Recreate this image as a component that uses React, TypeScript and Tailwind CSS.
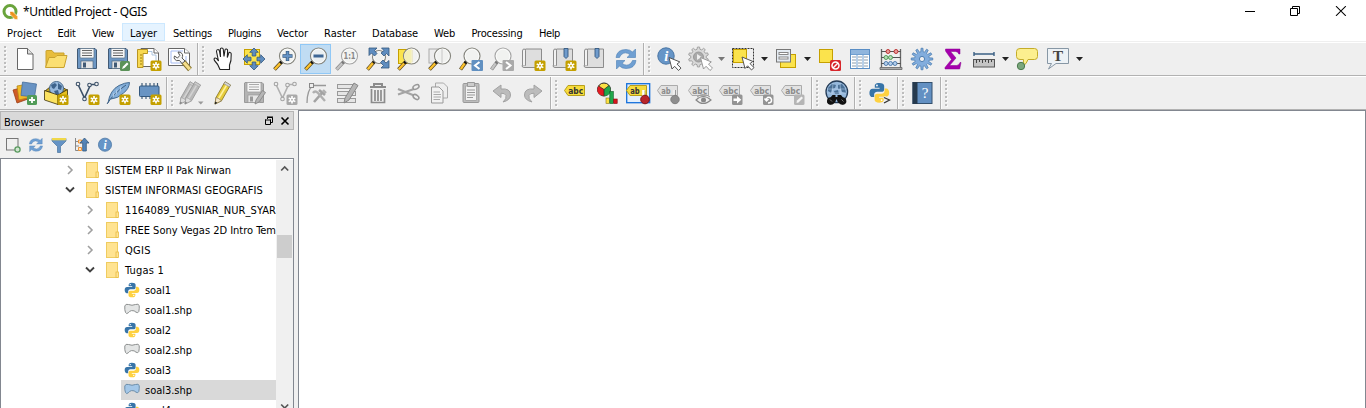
import React from "react";
import type { ReactNode } from "react";

type Kids = { children?: ReactNode };

function Icon({ children }: Kids) {
  return (
    <svg className="block h-6 w-6 overflow-visible" viewBox="0 0 24 24" fill="none">
      {children}
    </svg>
  );
}

function Tool({ children, active }: Kids & { active?: boolean }) {
  return (
    <div
      className={
        active
          ? "flex h-[30px] w-[31px] shrink-0 items-center bg-[#c0dcf3] pl-[3px] border border-[#90c8f6]"
          : "flex h-[30px] w-[31px] shrink-0 items-center pl-1"
      }
    >
      <Icon>{children}</Icon>
    </div>
  );
}

function Drop({ dim }: { dim?: boolean }) {
  return (
    <div className="flex w-3 shrink-0 justify-center">
      <svg className="block h-1 w-[7px]" viewBox="0 0 7 4">
        <path d="M0 0H7L3.5 4Z" fill={dim ? "#777" : "#222"} />
      </svg>
    </div>
  );
}

function Group({ children, className }: Kids & { className: string }) {
  return (
    <div className={"flex h-full shrink-0 items-center " + className}>
      <div className="flex w-[9px] shrink-0 flex-col gap-[2px] pl-1">
        {[0, 1, 2, 3, 4, 5, 6].map((i) => (
          <div key={i} className="h-[2px] w-[2px] bg-[#bdbdbd] shadow-[1px_1px_0_#fafafa]" />
        ))}
      </div>
      {children}
    </div>
  );
}

const Star = ({ gray }: { gray?: boolean }) => (
  <g>
    <rect x="13.5" y="13.5" width="11" height="10.5" rx="1.5" fill={gray ? "#a9a9a9" : "#c4a000"} />
    <path d="M19 14.9V22.6M15.7 16.9L22.3 20.6M22.3 16.9L15.7 20.6" stroke="#fff" strokeWidth="1.6" />
    <circle cx="19" cy="18.75" r="2.2" fill="#fff" />
    <circle cx="19" cy="18.75" r=".9" fill={gray ? "#a9a9a9" : "#c4a000"} />
  </g>
);

const Glass = ({ gray, x = 14.5, y = 9, r = 8 }: { gray?: boolean; x?: number; y?: number; r?: number }) => (
  <g>
    <path d={`M1.5 22.5L${x - r * 0.72} ${y + r * 0.72}`} stroke={gray ? "#888" : "#50401a"} strokeWidth="3.6" />
    <path d={`M1.8 22.2L${x - r * 0.9} ${y + r * 0.9}`} stroke={gray ? "#c4c4c4" : "#fcc22d"} strokeWidth="2.4" />
    <circle cx={x - r * 0.78} cy={y + r * 0.78} r="1.5" fill={gray ? "#777" : "#111"} />
    <circle cx={x} cy={y} r={r} fill="#f1f2f0" fillOpacity=".86" stroke={gray ? "#a5a5a5" : "#85857d"} strokeWidth="1.2" />
    <circle cx={x} cy={y} r={r - 1.2} stroke="#fff" strokeWidth=".7" />
  </g>
);

const Floppy = ({ gray }: { gray?: boolean }) => (
  <g>
    <path d="M3 1.5H20L21.5 3V21.5H2.5V2Z" fill={gray ? "#b4b4b4" : "#6d97c4"} stroke={gray ? "#9a9a9a" : "#415a75"} />
    <rect x="5" y="1.5" width="14" height="9.5" rx="1" fill="#f5f5f5" stroke={gray ? "#999" : "#5b7388"} strokeWidth=".7" />
    <path d="M7 3.5H17M7 6H17M7 8.5H17" stroke={gray ? "#aaa" : "#666"} strokeWidth="1.1" />
    <rect x="6" y="14" width="12" height="7.5" fill="#e6e6e6" stroke={gray ? "#999" : "#51697e"} strokeWidth=".7" />
    <rect x="8" y="15.5" width="3" height="5" fill={gray ? "#999" : "#415a75"} />
  </g>
);

const Pencil = ({ gray, dx = 0 }: { gray?: boolean; dx?: number }) => (
  <g transform={`translate(${dx} 0)`}>
    <path d="M4 23L5 16.5L14 .8L19.5 4L10.5 19.8Z" fill={gray ? "#b8b8b8" : "#e6cc3a"} stroke={gray ? "#999" : "#8d7b27"} strokeWidth=".9" />
    <path d="M7.6 17.5L16.4 2.8" stroke={gray ? "#d2d2d2" : "#fff2a0"} strokeWidth="1.6" />
    <path d="M4 23L5 16.5L7.8 17.6L10.5 19.8Z" fill={gray ? "#ddd" : "#f4e5c5"} stroke={gray ? "#999" : "#7a6a45"} strokeWidth=".6" />
    <path d="M3.7 23.4L4.2 20.5L6.3 21.8Z" fill={gray ? "#888" : "#222"} />
    <path d="M14 .8L19.5 4L18.4 5.9L12.9 2.7Z" fill={gray ? "#ccc" : "#d9d9d9"} stroke={gray ? "#999" : "#777"} strokeWidth=".5" />
  </g>
);

const SmallPen = () => (
  <path d="M13 23L14 19L20.5 9.5L23.5 11.5L17 21Z" fill="#b5b5b5" stroke="#888" strokeWidth=".9" />
);

const Arrows = ({ children }: Kids) => (
  <g fill="#5f8dbf" stroke="#34587f" strokeWidth=".8">{children}</g>
);

const Cursor = ({ x = 0, y = 0, gray }: { x?: number; y?: number; gray?: boolean }) => (
  <path
    transform={`translate(${x} ${y})`}
    d="M0 0L3 11.5L5.6 8.8L9.5 13L12 10.6L8 6.6L10.8 4.4Z"
    fill="#fff"
    stroke={gray ? "#999" : "#555"}
    strokeWidth="1"
  />
);

const Nodes = ({ gray }: { gray?: boolean }) => (
  <g>
    <path
      d="M3.5 4.5L9.5 17L14.5 6Q15 3.5 17 3.5H20"
      stroke={gray ? "#b0b0b0" : "#3b5068"}
      strokeWidth="1.6"
    />
    <g fill="#eee" stroke={gray ? "#a3a3a3" : "#3b5068"} strokeWidth="1.1">
      <circle cx="3" cy="3" r="1.8" />
      <circle cx="14.5" cy="4" r="1.8" />
      <circle cx="21.5" cy="3" r="1.8" />
      <circle cx="9.5" cy="18" r="1.8" />
    </g>
  </g>
);

const Tag = ({ gray, text = "abc" }: { gray?: boolean; text?: string }) => (
  <g>
    <path
      d="M.5 9.5L4 4.5H20.5V14.5H4Z"
      fill={gray ? "#e2e2e2" : "#f7dc3c"}
      stroke={gray ? "#ababab" : "#b79f1c"}
    />
    <text
      x="4.2"
      y="12.6"
      fontFamily="DejaVu Sans, sans-serif"
      fontWeight="bold"
      fontSize="8.2"
      textLength={text === "ab" ? 9.5 : 15}
      lengthAdjust="spacingAndGlyphs"
      fill={gray ? "#8b8b8b" : "#333"}
    >
      {text}
    </text>
  </g>
);

const GrayBadge = ({ children }: Kids) => (
  <g>
    <rect x="13" y="13.5" width="10.5" height="10.5" rx="1.5" fill="#949494" />
    {children}
  </g>
);

const Refresh = () => (
  <g fill="#6f9fd2" stroke="#4c7fb5" strokeWidth=".6">
    <path d="M2 10.5Q3 2.5 12 2.5Q16 2.5 18.5 5L21.5 2V10.5H13L16 7.6Q11 4.2 7.5 7.5Q6 9 5.5 10.5Z" />
    <path d="M22 13.5Q21 21.5 12 21.5Q8 21.5 5.5 19L2.5 22V13.5H11L8 16.4Q13 19.8 16.5 16.5Q18 15 18.5 13.5Z" />
  </g>
);

const Python = () => (
  <g>
    <path d="M11.8 1C7.8 1 7 2.7 7 4.2V6.5H12.3V7.5H4.5C2.5 7.5 1 9.2 1 12.1C1 15 2.4 16.8 4.3 16.8H6.3V14C6.3 12 8 10.9 9.6 10.9H14.6C16.2 10.9 17.4 9.6 17.4 8.2V4.2C17.4 2.2 15.6 1 11.8 1Z" fill="#3774a8" />
    <path d="M12.2 23C16.2 23 17 21.3 17 19.8V17.5H11.7V16.5H19.5C21.5 16.5 23 14.8 23 11.9C23 9 21.6 7.2 19.7 7.2H17.9V9.8C17.9 11.8 16.2 13.1 14.6 13.1H9.6C8 13.1 6.8 14.4 6.8 15.8V19.8C6.8 21.8 8.4 23 12.2 23Z" fill="#fed140" />
    <circle cx="9.4" cy="3.9" r="1" fill="#fff" />
    <circle cx="14.6" cy="20.1" r="1" fill="#fff" />
  </g>
);

const Info = () => (
  <g>
    <circle cx="9" cy="9" r="8.2" fill="#6695c7" stroke="#4a76a5" />
    <text x="9.2" y="14" textAnchor="middle" fontFamily="Liberation Serif, serif" fontWeight="bold" fontStyle="italic" fontSize="14.5" fill="#fff">i</text>
  </g>
);

const gearPath = (cx: number, cy: number, ro: number, ri: number, n: number) => {
  const p: string[] = [];
  for (let i = 0; i < n; i++) {
    const steps: [number, number][] = [[-0.3, ri], [-0.17, ro], [0.17, ro], [0.3, ri]];
    steps.forEach(([o, r]) => {
      const a = ((i + o) * 2 * Math.PI) / n - Math.PI / 2;
      p.push(`${(cx + r * Math.cos(a)).toFixed(2)} ${(cy + r * Math.sin(a)).toFixed(2)}`);
    });
  }
  return "M" + p.join("L") + "Z";
};

const Scroll = () => (
  <g>
    <path d="M4.5 2H20.5V20.5H3Q1 20.5 1 18.5H4.5Z" fill="#dedede" stroke="#8c8c8c" />
    <path d="M4.5 18.5V3.5Q4.5 2 3 2Q1.5 2 1.5 4V18.5" fill="#f2f2f2" stroke="#8c8c8c" />
  </g>
);

const Bookmark = () => (
  <path d="M12 1.5H16V9.5L14 11.5L12 9.5Z" fill="#6f9bcc" stroke="#34587f" strokeWidth=".9" />
);

function TopBar() {
  return (
    <div className="flex h-[32px] items-center bg-[#efefef]">
      <Group className="w-[198px] border-r border-[#b0b0b0] shadow-[1px_0_0_#fafafa]">
        <Tool>
          <path d="M4.5 1.5H14.5L20 7V22.5H4.5Z" fill="#fff" stroke="#666" />
          <path d="M14.5 1.5V7H20" fill="#ddd" stroke="#666" />
        </Tool>
        <Tool>
          <path d="M2 20V4Q2 3.5 2.5 3.5H8L10 6H20V20Z" fill="#e8bd3c" stroke="#c9a22f" />
          <path d="M1.5 20.5L5 10.5H11L13 8.5H23L20 20.5Z" fill="#fbdf72" stroke="#c9a22f" />
        </Tool>
        <Tool><Floppy /></Tool>
        <Tool>
          <Floppy />
          <rect x="14" y="14" width="10" height="10" rx="1.5" fill="#5a9158" />
          <path d="M16 22L17 19.5L21 15.5L22.5 17L18.5 21Z" fill="#fff" />
        </Tool>
        <Tool>
          <path d="M4 1.5H17L21.500 6V19.500H4Z" fill="#fff" stroke="#666" />
          <path d="M17 1.500V6H21.500" fill="#fff" stroke="#666" />
          <path d="M8 4.500H15V8H19V15" stroke="#9bb7d8" strokeWidth=".8" />
          <path d="M.5 2.5H10.5V6.5H6V20.5H.5Z" fill="#f8d952" stroke="#b99520" />
          <path d="M3 8H5M3 11H5M3 14H5M3 17H5" stroke="#9b7c10" />
          <Star />
        </Tool>
        <Tool>
          <path d="M.5 1.500H16.500L21.500 6V18.500H.5Z" fill="#fff" stroke="#666" />
          <path d="M16.500 1.500V6H21.500" fill="#fff" stroke="#666" />
          <path d="M3 4H15M3 4V16H18V9" stroke="#9bb3f0" strokeWidth=".9" />
          <path d="M15 14.500L22 22.500" stroke="#85712c" strokeWidth="5" />
          <path d="M15.300 14.800L21.800 22.200" stroke="#f5de8a" strokeWidth="3.200" />
          <path d="M10 5Q13.500 4.500 14.500 7.500Q15 9.500 14 11L17 14L14 16.500L11.500 13.500Q8 14.500 6.500 12Q5.800 10.500 6.500 9L9.500 11L11.800 8.500Z" fill="#f4f4f4" stroke="#555" strokeWidth="1" />
        </Tool>
      </Group>

      <Group className="w-[446px] border-r border-[#b0b0b0] shadow-[1px_0_0_#fafafa]">
        <Tool>
          <path d="M9 22.5Q7.5 17.5 3.5 13.5Q2.5 11.5 4 11Q5.5 10.5 7.5 14L5.5 4.5Q5.5 2.5 7 2.5Q8.2 2.5 8.5 4.5L9.5 10L9.3 2.5Q9.3 1 10.7 1Q12.2 1 12.3 2.5L13 9.5L14 3Q14.3 1.7 15.5 2Q16.8 2.3 16.6 3.8L16.3 10.5L17.6 6.5Q18 5 19.2 5.5Q20.5 6 20.2 7.5Q20.5 14 18.5 18V22.5Z" fill="#fff" stroke="#222" strokeWidth="1.1" />
        </Tool>
        <Tool>
          <rect x="2.5" y="2.5" width="15" height="15" fill="#fbe34c" stroke="#c6a000" />
          <Arrows>
            <path d="M12 1L16.3 5.3H13.8V9H10.2V5.3H7.7Z" />
            <path d="M12 23L7.7 18.7H10.2V15H13.8V18.7H16.3Z" />
            <path d="M1 12L5.3 7.7V10.2H9V13.8H5.3V16.3Z" />
            <path d="M23 12L18.7 16.3V13.8H15V10.2H18.7V7.7Z" />
          </Arrows>
        </Tool>
        <Tool><Glass /><path d="M14.5 4V14M9.5 9H19.5" stroke="#34587f" strokeWidth="3.4" /><path d="M14.5 4.6V13.4M10.1 9H18.9" stroke="#6593c5" strokeWidth="2" /></Tool>
        <Tool active><Glass /><path d="M9.5 9H19.5" stroke="#3f6795" strokeWidth="3" /></Tool>
        <Tool>
          <Glass gray />
          <text x="14.5" y="12" textAnchor="middle" fontFamily="DejaVu Sans, sans-serif" fontWeight="bold" fontSize="8" textLength="12" lengthAdjust="spacingAndGlyphs" fill="#888">1:1</text>
        </Tool>
        <Tool>
          <Glass x={13} y={10} r={6.5} />
          <Arrows>
            <path d="M3 1H11L8.5 3.5L11 6.5L8.5 9L5.5 6L3 8.5Z" />
            <path d="M23 1V9L20.5 6.5L18 9L15 6L18 3.5L15.5 1Z" />
            <path d="M23 21H15L17.5 18.5L14.5 15.5L17 13L20 16L23 13.5Z" />
          </Arrows>
        </Tool>
        <Tool><rect x="1.5" y="2.5" width="14" height="14" fill="#fbe34c" stroke="#c6a000" /><Glass /><path d="M14.5 2.2V16Q9 16.5 7.5 11Q6.5 3 14.5 2.2Z" fill="#f4efb4" /></Tool>
        <Tool><rect x="1" y="2" width="13" height="14" fill="#ededed" stroke="#aaa" /><Glass /><path d="M14 2V16" stroke="#ccc" /></Tool>
        <Tool><Glass x={13} /><rect x="12.5" y="13" width="11.5" height="11" rx="1" fill="#6190c1" /><path d="M20.5 15L16 18.5L20.5 22" stroke="#fff" strokeWidth="2" /></Tool>
        <Tool><Glass gray x={13} /><rect x="12.5" y="13" width="11.5" height="11" rx="1" fill="#aaa" /><path d="M16 15L20.5 18.5L16 22" stroke="#fff" strokeWidth="2" /></Tool>
        <Tool><Scroll /><Star /></Tool>
        <Tool><Scroll /><Bookmark /><Star /></Tool>
        <Tool><Scroll /><Bookmark /></Tool>
        <Tool><Refresh /></Tool>
      </Group>

      <Group className="">
        <Tool><Info /><Cursor x={12} y={10.5} /></Tool>
        <Tool>
          <path d={gearPath(10.5, 10, 10, 7.8, 10)} fill="#d9d9d9" stroke="#a2a2a2" />
          <circle cx="10.5" cy="10" r="5" fill="#aaa" stroke="#999" />
          <path d="M9 7L13.5 10L9 13Z" fill="#eee" />
          <Cursor x={12.5} y={10.5} gray />
        </Tool>
        <Drop dim />
        <Tool>
          <rect x="1.5" y="1.5" width="21" height="19" stroke="#333" strokeDasharray="2 1" />
          <rect x="2.5" y="2.5" width="13" height="13" fill="#fbe34c" stroke="#c6a000" />
          <Cursor x={11} y={10} />
        </Tool>
        <Drop />
        <Tool>
          <rect x="6.5" y="7.5" width="15" height="13" fill="#fbe34c" stroke="#c6a000" />
          <rect x="2.5" y="2.5" width="14" height="12.5" fill="#e4ebf2" stroke="#777" />
          <path d="M4.500 6.5H14.500M4.500 11H14.500" stroke="#888" strokeWidth="3" />
          <path d="M5.5 6.5H13.5M5.5 11H13.5" stroke="#fff" strokeWidth="1" />
        </Tool>
        <Drop />
        <Tool>
          <rect x="2.5" y="2.5" width="13" height="13" fill="#fbe34c" stroke="#c6a000" />
          <rect x="13" y="13" width="11" height="11" rx="1.5" fill="#d7262b" />
          <circle cx="18.5" cy="18.5" r="3.5" stroke="#fff" strokeWidth="1.5" /><path d="M16 21L21 16" stroke="#fff" strokeWidth="1.5" />
        </Tool>
        <Tool>
          <rect x="2.5" y="2.5" width="19" height="19" fill="#fff" stroke="#5a8ec5" />
          <rect x="3" y="3" width="18" height="4" fill="#8fb5dd" />
          <path d="M3 7.5H21M9 7V21M15 7V21" stroke="#709fd0" />
          <path d="M4 10H8M4 13H8M4 16H8M4 19H8M10 10H14M10 13H14M10 16H14M10 19H14M16 10H20M16 13H20M16 16H20M16 19H20" stroke="#8b9cac" />
        </Tool>
        <Tool>
          <path d="M2.5 2V21M21.5 2V21" stroke="#666" strokeWidth="1.3" />
          <path d="M1 20.5H23V22.5H1Z" fill="#aaa" stroke="#666" strokeWidth=".8" />
          <path d="M2 4.500H22M2 10.500H22M2 16.500H22" stroke="#555" />
          <g fill="#e89a9a" stroke="#b82626" strokeWidth=".9"><circle cx="9" cy="4.5" r="2" /><circle cx="17" cy="4.5" r="2" /></g>
          <g fill="#b5deb5" stroke="#4a9350" strokeWidth=".9"><circle cx="7" cy="10.5" r="2" /><circle cx="11.5" cy="10.5" r="2" /></g>
          <g fill="#b5cfec" stroke="#4776a9" strokeWidth=".9"><circle cx="7" cy="16.5" r="2" /><circle cx="11.5" cy="16.5" r="2" /><circle cx="16" cy="16.5" r="2" /></g>
        </Tool>
        <Tool>
          <path d={gearPath(12, 12, 10.8, 7.3, 12)} fill="#82addd" stroke="#4d7fb3" strokeWidth=".8" />
          <circle cx="12" cy="12" r="2.6" fill="#efefef" stroke="#4d7fb3" />
        </Tool>
        <Tool>
          <path d="M4.5 2H19V7H17.8Q17.3 4.5 14.5 4.5H9.5L15 11L8.5 18.5H15.5Q18 18.5 19 15.5H20L18.7 22H4V20.5L10.5 12.5L4.5 4Z" fill="#a600ae" stroke="#86008d" strokeWidth=".5" />
        </Tool>
        <Tool>
          <path d="M2 7H22M2 5V9M22 5V9" stroke="#3b6084" strokeWidth="1.4" />
          <rect x="1.5" y="12.5" width="21" height="7.5" fill="#c4c4c4" stroke="#555" />
          <path d="M4.5 13V16M7.5 13V15M10.5 13V16M13.5 13V15M16.5 13V16M19.5 13V15" stroke="#444" />
        </Tool>
        <Drop />
        <Tool>
          <path d="M5 1.5H19.500Q22.500 1.5 22.500 4.5V9.5Q22.500 12.5 19.500 12.5H13Q12 17 7 19.500Q9 16 8.5 12.5H5Q1.5 12.5 1.5 9.5V4.5Q1.5 1.5 5 1.5Z" fill="#fcef8f" stroke="#c4ac29" />
          <circle cx="6" cy="19" r="3.7" fill="#7aa67c" stroke="#4a794d" />
        </Tool>
        <Tool>
          <path d="M1.5 1.5H22.5V16.5H10L2.5 22L5.5 16.5H1.5Z" fill="#edf2f6" stroke="#8797a5" />
          <text x="12" y="14.2" textAnchor="middle" fontFamily="Liberation Serif, serif" fontWeight="bold" fontSize="15.5" fill="#444">T</text>
        </Tool>
        <Drop />
      </Group>
    </div>
  );
}

function BottomBar() {
  return (
    <div className="flex h-[32px] items-center bg-[#efefef]">
      <Group className="w-[167px] border-r border-[#b0b0b0] shadow-[1px_0_0_#fafafa]">
        <Tool>
          <path d="M0 9L11 6L15 18L4 22Z" fill="#cf5b25" stroke="#9b3d13" strokeWidth=".8" />
          <path d="M4 5L15 3L18 16L6 19Z" fill="#f2b925" stroke="#b28615" strokeWidth=".8" />
          <path d="M9.5 1L23.5 3L21.5 16L8 14.5Z" fill="#6993c3" stroke="#466e9c" strokeWidth=".8" />
          <rect x="14" y="14" width="10" height="10" rx="1.5" fill="#519b58" /><path d="M19 16V22M16 19H22" stroke="#fff" strokeWidth="1.8" />
        </Tool>
        <Tool>
          <path d="M1 10L6 6H18L23 9L15 13Z" fill="#c5a41b" stroke="#3b300b" strokeWidth=".8" />
          <circle cx="12.5" cy="7.5" r="7" fill="#98b9dc" stroke="#48698b" />
          <path d="M7 4L11 2L13 4L10 8L8 7ZM14 2L18 5L17 9L14 8ZM10 10L14 9L15 13L12 14Z" fill="#3e638c" />
          <path d="M.5 9.5L14 14V23.5L.5 19Z" fill="#fbe260" stroke="#3b300b" strokeWidth=".8" />
          <path d="M14 14L23.5 8.5V18L14 23.5Z" fill="#e6c022" stroke="#3b300b" strokeWidth=".8" />
          <Star />
        </Tool>
        <Tool><Nodes /><Star /></Tool>
        <Tool>
          <path d="M2 22Q4 9 13 4.5Q19 1.5 23.5 1.5Q23 8 17.5 12Q12 17.5 5 18" fill="#82add8" stroke="#476d93" />
          <path d="M1 23Q7 13 20 4" stroke="#3d5e80" />
          <path d="M8 12L7 16M11 8.5L10 13.5M15 5.5L14 10.5" stroke="#b7d2ed" />
          <Star />
        </Tool>
        <Tool>
          <path d="M5 2V18M9 2V18M13 2V18M17 2V18M20.5 2V18" stroke="#405d7a" strokeWidth="1.2" />
          <rect x="2.5" y="5" width="19.5" height="10.5" rx="1" fill="#6994c3" stroke="#34587f" />
          <Star />
        </Tool>
      </Group>

      <Group className="w-[384px] border-r border-[#b0b0b0] shadow-[1px_0_0_#fafafa]">
        <Tool><Pencil gray dx={-4} /><Pencil gray dx={1} /><path d="M18 20.500H23.5L20.8 23.500Z" fill="#999" /></Tool>
        <Tool><Pencil /></Tool>
        <Tool><Floppy gray /><SmallPen /></Tool>
        <Tool><Nodes gray /><Star gray /></Tool>
        <Tool>
          <path d="M3 22Q3 9 9 4.5H22" stroke="#999" strokeWidth="1.3" />
          <rect x="5.5" y="2.5" width="4" height="4" fill="#eee" stroke="#888" />
          <path d="M10 21L18 12M15 9L21 14" stroke="#a3a3a3" strokeWidth="2.6" />
          <path d="M9 12Q11 9 14 12L21 20M19 9L22 12" stroke="#b0b0b0" strokeWidth="2.4" />
        </Tool>
        <Tool>
          <g fill="#e5e5e5" stroke="#999"><rect x="2.5" y="3.5" width="18" height="4" /><rect x="2.5" y="10.5" width="18" height="4" /><rect x="2.5" y="17.5" width="18" height="4" /></g>
          <path d="M9 22L10 17L19 2L23 4.5L14 19Z" fill="#b5b5b5" stroke="#888" />
        </Tool>
        <Tool>
          <path d="M4 6H20M8 6V3H16V6" stroke="#8c8c8c" strokeWidth="2" />
          <path d="M5.5 8V21.5H18.5V8M9 9V20M12 9V20M15 9V20" stroke="#8c8c8c" strokeWidth="1.7" />
        </Tool>
        <Tool>
          <path d="M1 8L17 14.5M1 13.500L17 8" stroke="#a4a4a4" strokeWidth="2.1" />
          <ellipse cx="19" cy="6" rx="3.2" ry="2" transform="rotate(-25 19 6)" stroke="#999" strokeWidth="1.5" />
          <ellipse cx="19" cy="16" rx="3.2" ry="2" transform="rotate(35 19 16)" stroke="#999" strokeWidth="1.5" />
        </Tool>
        <Tool>
          <path d="M7.5 2H15.5L19.5 6V17H7.5Z" fill="#eee" stroke="#aaa" />
          <path d="M3.5 6H11L15 10V22H3.5Z" fill="#f2f2f2" stroke="#999" />
          <path d="M5.5 11H12M5.5 13.5H13M5.5 16H13M5.5 18.5H12" stroke="#aaa" />
        </Tool>
        <Tool>
          <rect x="4" y="2.5" width="16" height="19" rx="1" fill="#bdbdbd" stroke="#999" />
          <path d="M6.5 5H17.5V19.500H6.5Z" fill="#f2f2f2" stroke="#aaa" />
          <path d="M8.5 1.5H15.5V5.5H8.5Z" fill="#ccc" stroke="#999" />
          <path d="M8 9H16M8 11.5H16M8 14H16M8 16.5H14" stroke="#999" />
        </Tool>
        <Tool><path d="M3 10L11 4V8Q20.5 7 20.5 14Q20.5 19 13 21Q17 17.5 16 14.5Q15 12 11 12.2V16.5Z" fill="#bcbcbc" stroke="#a2a2a2" /></Tool>
        <Tool><path d="M21 10L13 4V8Q3.5 7 3.5 14Q3.5 19 11 21Q7 17.5 8 14.5Q9 12 13 12.2V16.5Z" fill="#bcbcbc" stroke="#a2a2a2" /></Tool>
      </Group>

      <Group className="w-[261px] border-r border-[#b0b0b0] shadow-[1px_0_0_#fafafa]">
        <Tool><Tag /></Tool>
        <Tool>
          <circle cx="9" cy="8.500" r="6.500" fill="#fbe044" stroke="#222" />
          <path d="M9 8.500L3.500 5Q.5 10 5 13.800L9 15Z" fill="#e31b23" />
          <path d="M9 8.500V15Q15.500 15 15.500 8Q15 6 14 4.500Z" fill="#20a64b" />
          <path d="M3.700 5L9 8.500L14 4.500M9 8.500V15" stroke="#222" strokeWidth=".7" />
          <rect x="11" y="17" width="3.500" height="5.500" fill="#fbe044" stroke="#8a761a" strokeWidth=".6" />
          <rect x="14.800" y="10.500" width="3.500" height="12" fill="#20a64b" stroke="#0c5c26" strokeWidth=".6" />
          <rect x="18.700" y="18" width="3.500" height="4.500" fill="#d7161d" stroke="#84070c" strokeWidth=".6" />
        </Tool>
        <Tool>
          <rect x=".7" y="2.7" width="23" height="19" fill="#e4effb" stroke="#1470dc" strokeWidth="1.3" />
          <Tag text="ab" /><path d="M17.500 9V18" stroke="#fff" strokeWidth="2.600" /><path d="M19 9.500V18" stroke="#996" strokeWidth=".7" /><circle cx="19" cy="18.5" r="4.300" fill="#b9252b" stroke="#7e1216" />
        </Tool>
        <Tool><Tag gray text="ab" /><path d="M17 9V17" stroke="#eee" strokeWidth="2.4" /><path d="M18.500 9V17" stroke="#999" /><circle cx="18" cy="18.500" r="4.200" fill="#8e8e8e" stroke="#808080" /></Tool>
        <Tool><Tag gray /><path d="M8 19Q15 12 23 19Q15 26 8 19Z" fill="#eee" stroke="#888" strokeWidth="1.1" /><circle cx="15.5" cy="19" r="2.5" fill="#888" /><path d="M9 16Q15.5 11 22 16" stroke="#999" /></Tool>
        <Tool><Tag gray /><GrayBadge><path d="M14.5 17.500H18V15L22.3 18.700L18 22.500V20H14.5Z" fill="#fff" /></GrayBadge></Tool>
        <Tool><Tag gray /><GrayBadge><path d="M18 22Q22 22 21.5 18.500Q20.5 15.500 17.5 16.500Q16 17.500 16.3 19M14.5 17.500L16.5 20L18.5 18" stroke="#fff" strokeWidth="1.5" /></GrayBadge></Tool>
        <Tool><Tag gray /><rect x="13" y="13.5" width="10.5" height="10.5" rx="1.5" fill="#b5b5b5" /><path d="M15.5 22L16 19.500L20.5 15.500L22 17L17.5 21.500Z" fill="#f4f4f4" /></Tool>
      </Group>

      <Group className="w-[43px] border-r border-[#b0b0b0] shadow-[1px_0_0_#fafafa]">
        <Tool>
          <circle cx="11.8" cy="10.8" r="10.8" fill="#95b8dc" stroke="#253c57" strokeWidth="1.3" />
          <path d="M3 7L7 3L11 4L10 7L7 8L6 12L3 10ZM13 4L17 3L20 7L21 12L17 11L16 8L13 8ZM9 10L13 9L14 13H10Z" fill="#4a7096" />
          <path d="M2 8H21M2 12H21M8 2L7 14M15 2L16 14" stroke="#c0d7ed" strokeWidth=".5" />
          <path d="M7.500 14H10.500V16H12.500V14H16L21.500 21L18 23.500L13 21.500L11.500 18L10 21.500L5 23.500L2 21Z" fill="#111" />
          <circle cx="5.8" cy="20" r="3.8" fill="#111" /><circle cx="17.500" cy="20" r="3.800" fill="#111" /><path d="M5 18.500L7 20.500M16.500 18.500L18.500 20.500" stroke="#777" />
        </Tool>
      </Group>
      <Group className="w-[43px] border-r border-[#b0b0b0] shadow-[1px_0_0_#fafafa]">
        <Tool><g transform="translate(.5 1) scale(.9)"><Python /></g><path d="M16 16.5L21.5 19L16 22" stroke="#efefef" strokeWidth="3.4" /><path d="M16 16.5L21.5 19L16 22" stroke="#333" strokeWidth="1.3" /></Tool>
      </Group>
      <Group className="w-[43px] border-r border-[#b0b0b0] shadow-[1px_0_0_#fafafa]">
        <Tool>
          <rect x="2" y="1.5" width="19" height="21" fill="#6390c2" stroke="#34516e" />
          <rect x="1.5" y="1" width="5" height="22" fill="#263a4e" />
          <text x="14" y="16.5" textAnchor="middle" fontFamily="Liberation Serif, serif" fontSize="15" fill="#fff">?</text>
        </Tool>
      </Group>
      <Group className="">{null}</Group>
    </div>
  );
}

const menus: [string, string, number][] = [
  ["Project", "w-[49px]", 35],
  ["Edit", "w-[35px]", 18],
  ["View", "w-[38px]", 22],
  ["Layer", "w-[43px]", 27],
  ["Settings", "w-[55px]", 39],
  ["Plugins", "w-[49px]", 33],
  ["Vector", "w-[47px]", 31],
  ["Raster", "w-[48px]", 32],
  ["Database", "w-[62px]", 46],
  ["Web", "w-[37px]", 21],
  ["Processing", "w-[68px]", 51],
  ["Help", "w-[37px]", 21],
];

function Label({ text, width }: { text: string; width: number }) {
  const ref = React.useRef<HTMLSpanElement>(null);
  React.useLayoutEffect(() => {
    const el = ref.current;
    if (!el) return;
    el.style.letterSpacing = "0px";
    const natural = el.getBoundingClientRect().width;
    el.style.letterSpacing = `${(width - natural) / text.length}px`;
  }, [text, width]);
  return <span ref={ref} className="whitespace-pre">{text}</span>;
}

type Row = { text: string; depth: string; kind: "folder" | "py" | "shp"; open?: boolean; sel?: boolean; w: number };
const rows: Row[] = [
  { text: "SISTEM ERP II Pak Nirwan", depth: "pl-[63px]", kind: "folder", w: 126 },
  { text: "SISTEM INFORMASI GEOGRAFIS", depth: "pl-[63px]", kind: "folder", open: true, w: 158 },
  { text: "1164089_YUSNIAR_NUR_SYAR", depth: "pl-[83px]", kind: "folder", w: 151 },
  { text: "FREE Sony Vegas 2D Intro Tem", depth: "pl-[83px]", kind: "folder", w: 151 },
  { text: "QGIS", depth: "pl-[83px]", kind: "folder", w: 26 },
  { text: "Tugas 1", depth: "pl-[83px]", kind: "folder", open: true, w: 39 },
  { text: "soal1", depth: "pl-[120px]", kind: "py", w: 26 },
  { text: "soal1.shp", depth: "pl-[120px]", kind: "shp", w: 47 },
  { text: "soal2", depth: "pl-[120px]", kind: "py", w: 26 },
  { text: "soal2.shp", depth: "pl-[120px]", kind: "shp", w: 47 },
  { text: "soal3", depth: "pl-[120px]", kind: "py", w: 26 },
  { text: "soal3.shp", depth: "pl-[120px]", kind: "shp", sel: true, w: 47 },
  { text: "soal4", depth: "pl-[120px]", kind: "py", w: 26 },
];

function TreeRow({ r }: { r: Row }) {
  return (
    <div className={"flex h-5 shrink-0 items-center overflow-hidden " + r.depth}>
      {r.kind === "folder" && (
        <svg className="mr-[9px] h-3 w-3 shrink-0" viewBox="0 0 12 12" fill="none">
          {r.open ? (
            <path d="M2 3.500L6 7.500L10 3.500" stroke="#404040" strokeWidth="1.9" />
          ) : (
            <path d="M4 2L8 6L4 10" stroke="#a0a0a0" strokeWidth="1.6" />
          )}
        </svg>
      )}
      <div className={"flex h-5 grow items-center " + (r.sel ? "bg-[#d9d9d9]" : "")}>
        {r.kind === "folder" && (
          <svg className="mr-[6px] h-4 w-[14px] shrink-0" viewBox="0 0 14 16">
            <rect x="1.5" y=".5" width="11" height="15" fill="#ffe391" stroke="#efcc60" />
            <rect x="11" y="10" width="2.5" height="5.5" fill="#ffe391" stroke="#e8bc45" strokeWidth=".8" />
          </svg>
        )}
        {r.kind === "py" && (
          <svg className="mr-[5px] ml-[3px] h-4 w-4 shrink-0" viewBox="0 0 24 24"><Python /></svg>
        )}
        {r.kind === "shp" && (
          <svg className="mr-[5px] ml-[3px] h-4 w-4 shrink-0" viewBox="0 0 16 16">
            <path d="M.8 4Q1.500 1.500 4.500 2.500Q8 4 11.500 2.500Q14.500 1.500 15.200 3.500Q15.500 6 14.800 9.500Q14 11.500 12 10.200Q10.500 8.300 7.500 8.600Q5.500 9 4.300 10.800Q2.500 12.500 1.500 10.500Q.5 8 .8 4Z" fill={r.sel ? "#a3c7e8" : "#e3e5e5"} stroke={r.sel ? "#6c8da9" : "#8c8f8f"} />
          </svg>
        )}
        <Label text={r.text} width={r.w} />
      </div>
    </div>
  );
}

function Small({ children }: Kids) {
  return <svg className="h-4 w-4 shrink-0 overflow-visible" viewBox="0 0 16 16" fill="none">{children}</svg>;
}

function Browser() {
  return (
    <div className="flex w-[294px] shrink-0 flex-col">
      <div className="mt-px flex h-[19px] shrink-0 items-center border border-[#b5b5b5] bg-[#d9d9d9] pt-[3px] pl-[3px]">
        <Label text="Browser" width={40} />
        <svg className="mr-[3px] mb-[3px] ml-auto h-[10px] w-[26px]" viewBox="0 0 26 10" fill="none">
          <path d="M3.5 3V1.5H8.5V6.5H7M3 1H9" stroke="#000" />
          <path d="M1 4H7M1.5 3.5V8.5H6.5V3.5" stroke="#000" />
          <path d="M17.5 1.5L24.5 8.5M24.5 1.5L17.5 8.5" stroke="#000" strokeWidth="1.6" />
        </svg>
      </div>
      <div className="flex h-7 shrink-0 items-center gap-[7px] pt-[2px] pl-[5px]">
        <Small><rect x="1.5" y="1.5" width="11.5" height="11.5" stroke="#777" /><circle cx="12.5" cy="12.5" r="2.6" fill="#cfe5cf" stroke="#5a9a60" strokeWidth="1.3" /></Small>
        <Small><g transform="scale(.66)"><Refresh /></g></Small>
        <Small><path d="M1 1.5H15V4L9.5 9.5V15.5H6.5V9.5L1 4Z" fill="#6593c5" stroke="#4b749f" strokeWidth=".7" /><path d="M1 1H15V3.3H1Z" fill="#f0d84a" /></Small>
        <Small><path d="M1.5 1V13.5H5M1.5 4.5H5M1.5 9H5" stroke="#888" /><path d="M4.5 3H7.5V6H4.5ZM4.5 10.5H7.5V13.5H4.5Z" stroke="#ef9436" fill="#fbe0c0" /><path d="M10.5 1L15 6H12.3V14H8.7V6H6Z" fill="#5484b7" stroke="#34587f" strokeWidth=".8" /></Small>
        <Small><g transform="translate(.8 .5) scale(.8)"><Info /></g></Small>
      </div>
      <div className="flex h-[250px] border border-b-0 border-[#828790] bg-white pt-px">
        <div className="flex w-[275px] flex-col overflow-hidden">
          {rows.map((r) => <TreeRow key={r.text} r={r} />)}
        </div>
        <div className="flex w-[17px] flex-col items-center bg-[#f0f0f0]">
          <svg className="h-[75px] w-4 shrink-0" viewBox="0 0 16 75" fill="none"><path d="M4.2 10.5L7.7 7L11.2 10.5" stroke="#555" strokeWidth="1.7" /></svg>
          <div className="mr-px h-[23px] w-[15px] shrink-0 bg-[#cdcdcd]" />
          <svg className="mt-auto h-[6px] w-4 shrink-0" viewBox="0 0 16 6" fill="none"><path d="M4.2 2.5L7.7 6L11.2 2.5" stroke="#555" strokeWidth="1.7" /></svg>
        </div>
      </div>
    </div>
  );
}

export default function App() {
  return (
    <div className="flex h-[408px] w-[1366px] flex-col overflow-hidden bg-white font-['DejaVu_Sans_Condensed','DejaVu_Sans',sans-serif] text-[11px] leading-none text-black">
      <header className="flex h-[23px] shrink-0 items-center pl-[2px]">
        <svg className="h-4 w-4" viewBox="0 0 16 16" fill="none">
          <circle cx="8" cy="7.5" r="6" stroke="#6aa43c" strokeWidth="3" />
          <path d="M8 7.500H11L15.7 12.500V15.5H13L8 10.5Z" fill="#f0a02a" stroke="#fff" strokeWidth=".5" />
          <path d="M8.500 8L12 11.500" stroke="#ee7913" />
        </svg>
        <span className="ml-[5px] font-['Noto_Sans',sans-serif] text-xs"><Label text="*Untitled Project - QGIS" width={124} /></span>
        <svg className="mr-[19px] mb-[2px] ml-auto h-[10px] w-[102px]" viewBox="0 0 102 10" fill="none" stroke="#000">
          <path d="M0 5.5H10" />
          <path d="M45.500 2.500H52.500V9.500H45.500ZM47.500 2.500V.5H54.500V7.500H52.500" />
          <path d="M91 .2L100.800 9.800M100.800 .2L91 9.800" strokeWidth="1.1" />
        </svg>
      </header>
      <nav className="flex h-[18px] shrink-0">
        {menus.map(([m, w, t]) => (
          <div
            key={m}
            className={
              "flex shrink-0 items-center pt-[2px] " + w + (m === "Project" ? " pl-[7px]" : " justify-center") +
              (m === "Layer" ? " bg-[#e5f3ff] outline-1 -outline-offset-1 outline-[#cce8ff]" : "")
            }
          >
            <Label text={m} width={t} />
          </div>
        ))}
      </nav>
      <div className="flex h-[69px] shrink-0 flex-col border-t border-[#efefef]">
        <div className="h-px shrink-0 bg-white" />
        <TopBar />
        <div className="h-px shrink-0 bg-[#b2b2b2]" />
        <div className="h-px shrink-0 bg-white" />
        <BottomBar />
        <div className="h-px shrink-0 bg-[#b2b2b2]" />
      </div>
      <main className="flex grow bg-[#f0f0f0]">
        <Browser />
        <div className="ml-1 grow border-t border-r border-l border-[#828790] bg-white" />
      </main>
    </div>
  );
}
